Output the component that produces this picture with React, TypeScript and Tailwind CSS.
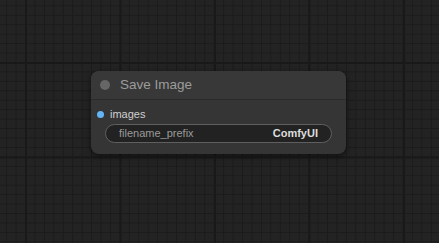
import React from 'react';

function Widget({ label, value }: { label: string; value: string }) {
  return (
    <div className="mx-[14px] mt-[3px] flex h-[19px] items-center justify-between rounded-full border border-[#5f5f5f] bg-[#222222] pl-[13px] pr-[13px] text-[11px]">
      <span className="text-[#9a9a9a]">{label}</span>
      <span className="font-bold text-[#dddddd]">{value}</span>
    </div>
  );
}

export default function App() {
  return (
    <div className="h-[243px] w-[439px] overflow-hidden bg-[#232323] bg-[linear-gradient(to_right,#191919_2px,transparent_2px),linear-gradient(to_bottom,#191919_2px,transparent_2px),linear-gradient(to_right,#1b1b1b_1px,transparent_1px),linear-gradient(to_bottom,#1b1b1b_1px,transparent_1px)] bg-size-[94.5px_94.5px,94.5px_94.5px,9.45px_9.45px,9.45px_9.45px] bg-position-[25px_62px] pl-[91px] pt-[71px] font-['Liberation_Sans',Arial,sans-serif]">
      <div className="w-[255px] rounded-[8px] bg-[#353535] pb-[11px] shadow-[0_2px_6px_rgba(0,0,0,0.55)]">
        <div className="flex h-[29px] items-center rounded-t-[8px] border-b border-[#2b2b2b] bg-[#383838] pl-[9px]">
          <span className="h-[10px] w-[10px] rounded-full bg-[#666666]" />
          <span className="ml-[10px] text-[13.5px] text-[#9c9c9c]">Save Image</span>
        </div>
        <div className="mt-[7px] flex h-[14px] items-center pl-[6px]">
          <span className="h-[7px] w-[7px] rounded-full bg-[#64b5f6]" />
          <span className="ml-[6px] text-[11px] text-[#d0d0d0]">images</span>
        </div>
        <Widget label="filename_prefix" value="ComfyUI" />
      </div>
    </div>
  );
}
